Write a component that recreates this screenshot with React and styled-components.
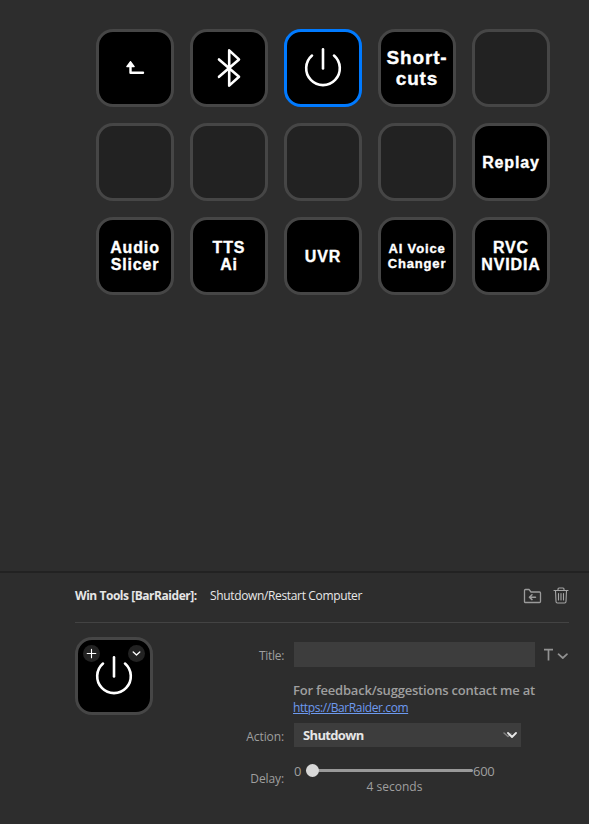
import React from 'react';
import styled, { createGlobalStyle } from 'styled-components';

const GlobalStyle = createGlobalStyle`
  body { margin: 0; background: #2d2d2d; }
  * { box-sizing: border-box; }
`;

const uiFont = '"Open Sans", "Noto Sans", sans-serif';

const Window = styled.main`
  width: 589px;
  height: 824px;
  display: flex;
  flex-direction: column;
  overflow: hidden;
  background: #2d2d2d;
  color: #9f9f9f;
  font-family: ${uiFont};
`;

const Canvas = styled.section`
  height: 571px;
  flex: none;
  padding: 29px 0 0 96px;
`;

const KeyGrid = styled.div`
  display: grid;
  grid-template-columns: repeat(5, 78px);
  grid-auto-rows: 78px;
  gap: 16px;
`;

const Key = styled.div`
  position: relative;
  width: 78px;
  height: 78px;
  display: flex;
  align-items: center;
  justify-content: center;
  border: 3px solid ${(p) => (p.$selected ? '#007aff' : '#464646')};
  border-radius: 17px;
  background: ${(p) => (p.$empty ? '#222222' : '#000000')};
`;

const KeyTitle = styled.span`
  color: #fff;
  font-family: "Liberation Sans", Arial, sans-serif;
  font-weight: 700;
  font-size: ${(p) => p.$size}px;
  line-height: ${(p) => p.$line}px;
  letter-spacing: ${(p) => p.$spacing}px;
  -webkit-text-stroke: 0.35px #fff;
  text-align: center;
  white-space: pre;
`;

const Glyph = styled.svg`
  display: block;
  flex: none;
  fill: none;
  stroke: ${(p) => p.$color || '#fff'};
  stroke-linecap: round;
  stroke-linejoin: round;
`;

const Inspector = styled.section`
  flex: 1;
  padding: 0 20px 0 75px;
  border-top: 2px solid #222222;
`;

const Header = styled.header`
  height: 50px;
  display: flex;
  align-items: center;
  border-bottom: 1px solid #434343;
  padding-bottom: 4px;
`;

const PluginName = styled.h1`
  width: 135px;
  margin: 0;
  font-size: 12px;
  font-weight: 700;
  letter-spacing: -0.46px;
  color: #e6e6e6;
  white-space: nowrap;
`;

const ActionName = styled.span`
  font-size: 12px;
  letter-spacing: -0.35px;
  color: #e8e8e8;
`;

const HeaderTools = styled.div`
  display: flex;
  align-items: center;
  gap: 11px;
  margin-left: auto;
`;

const Details = styled.div`
  display: flex;
  padding-top: 14px;
`;

const Badge = styled.span`
  position: absolute;
  top: 5px;
  ${(p) => p.$side}: 5px;
  width: 17px;
  height: 17px;
  display: grid;
  place-items: center;
  border-radius: 50%;
  background: #222222;
`;

const Form = styled.div`
  flex: 1;
  display: flex;
  flex-direction: column;
  padding-top: 5px;
`;

const Row = styled.div`
  display: grid;
  grid-template-columns: 131px 1fr;
  column-gap: 10px;
  height: ${(p) => p.$height}px;
  margin-bottom: ${(p) => p.$after || 0}px;
`;

const Label = styled.label`
  padding-top: ${(p) => p.$top}px;
  text-align: right;
  font-size: 12px;
  line-height: 18px;
  letter-spacing: ${(p) => p.$spacing || -0.1}px;
`;

const TitleField = styled.div`
  display: flex;
  align-items: center;
`;

const TitleInput = styled.input`
  width: 241px;
  height: 25px;
  padding: 0 8px;
  border: 0;
  outline: 0;
  background: #3d3d3d;
  color: #ddd;
  font: 12px ${uiFont};
`;

const TextTools = styled.div`
  display: flex;
  margin-left: 8px;
`;

const Feedback = styled.div`
  margin-left: -1px;
  display: flex;
  flex-direction: column;
  align-items: flex-start;
  white-space: nowrap;
`;

const Message = styled.strong`
  font-size: 13px;
  line-height: 18px;
  font-weight: 600;
  letter-spacing: -0.21px;
`;

const Link = styled.a`
  font-size: 12px;
  line-height: 17px;
  letter-spacing: -0.4px;
  color: #6d9af0;
  text-decoration: underline;
`;

const Select = styled.div`
  width: 227px;
  height: 24px;
  display: flex;
  align-items: center;
  justify-content: space-between;
  padding: 0 4px 0 9px;
  background: #3d3d3d;
  color: #e6e6e6;
  font-size: 13px;
  font-weight: 700;
  letter-spacing: -0.65px;
`;

const Delay = styled.div`
  width: 201px;
`;

const SliderRow = styled.div`
  height: 19px;
  display: flex;
  align-items: center;
  font-size: 13px;
  line-height: 19px;
  letter-spacing: -0.3px;
`;

const SliderEnd = styled.span`
  width: ${(p) => p.$width}px;
  padding-top: 2px;
`;

const Track = styled.div`
  width: 167px;
  height: 3px;
  display: flex;
  align-items: center;
  border-radius: 2px;
  background: #999999;
`;

const Thumb = styled.div`
  width: 13px;
  height: 13px;
  flex: none;
  border-radius: 50%;
  background: #d8d8d8;
`;

const Value = styled.div`
  margin-top: -1px;
  font-size: 12px;
  line-height: 15px;
  text-align: center;
`;

function PowerIcon() {
  return (
    <Glyph width="42" height="42" viewBox="0 0 42 42" strokeWidth="2.6">
      <path d="M21 2.4V21.4" />
      <path d="M10 8.6A16.8 16.8 0 1 0 32 8.6" />
    </Glyph>
  );
}

function BluetoothIcon() {
  return (
    <Glyph width="24" height="40" viewBox="0 0 24 40" strokeWidth="2.6">
      <path d="M2 11.4L22 28.8L12.2 37.6V2.4L22 11.4L2 28.8" />
    </Glyph>
  );
}

function BackIcon() {
  return (
    <Glyph width="20" height="16" viewBox="0 0 20 16" strokeWidth="2.4">
      <path d="M5.5 6v6.8H18" />
      <path d="M5.5 1.6L9.2 6.6H1.8Z" fill="#fff" strokeWidth="1.2" />
    </Glyph>
  );
}

function FolderIcon() {
  return (
    <Glyph width="19" height="16" viewBox="0 0 19 16" strokeWidth="1.3" $color="#9b9b9b">
      <path d="M1.5 14V2.5Q1.5 1.5 2.5 1.5H6L8 4H16.5Q17.5 4 17.5 5V13.5Q17.5 14.5 16.5 14.5H2Q1.5 14.5 1.5 14Z" />
      <path d="M12.5 9.2H6.8M9 6.8L6.4 9.2L9 11.6" strokeWidth="1.5" />
    </Glyph>
  );
}

function TrashIcon() {
  return (
    <Glyph width="16" height="18" viewBox="0 0 16 18" strokeWidth="1.1" $color="#a6a6a6">
      <path d="M1 3.5H15M5 3V2Q5 1 6 1H10Q11 1 11 2V3M2.5 3.5L3 14.5Q3 16 4.5 16H11.5Q13 16 13 14.5L13.5 3.5M5.5 6.5V13M8 6.5V13M10.5 6.5V13" />
    </Glyph>
  );
}

function TextIcon() {
  return (
    <Glyph width="25" height="16" viewBox="0 0 25 16" strokeWidth="1.7" $color="#929292">
      <path d="M1 2.6H10M5.5 2.6V13.5" strokeLinecap="butt" />
      <path d="M15.5 7.2L19.8 11L24 7.2" />
    </Glyph>
  );
}

function SelectArrows() {
  return (
    <Glyph width="14" height="10" viewBox="0 0 14 10" strokeWidth="1.5">
      <path d="M1 3L5 6.5L8 4" stroke="#858585" strokeWidth="1.4" />
      <path d="M5 3L9 7L13 3" stroke="#e8e8e8" strokeWidth="1.8" />
    </Glyph>
  );
}

const large = { size: 19, line: 21, spacing: 0.85 };
const medium = { size: 16, line: 17, spacing: 0.85 };
const small = { size: 13, line: 15, spacing: 0.85 };

const keys = [
  { icon: <BackIcon /> },
  { icon: <BluetoothIcon /> },
  { icon: <PowerIcon />, selected: true },
  { title: 'Short-\ncuts', type: large },
  {},
  {},
  {},
  {},
  {},
  { title: 'Replay', type: medium },
  { title: 'Audio\nSlicer', type: medium },
  { title: 'TTS\nAi', type: medium },
  { title: 'UVR', type: medium },
  { title: 'AI Voice\nChanger', type: small },
  { title: 'RVC\nNVIDIA', type: medium },
];

export default function App() {
  return (
    <>
      <GlobalStyle />
      <Window>
        <Canvas>
          <KeyGrid>
            {keys.map(({ icon, title, type, selected }, i) => (
              <Key key={i} $selected={selected} $empty={!icon && !title}>
                {icon}
                {title && (
                  <KeyTitle $size={type.size} $line={type.line} $spacing={type.spacing}>
                    {title}
                  </KeyTitle>
                )}
              </Key>
            ))}
          </KeyGrid>
        </Canvas>
        <Inspector>
          <Header>
            <PluginName>Win Tools [BarRaider]:</PluginName>
            <ActionName>Shutdown/Restart Computer</ActionName>
            <HeaderTools>
              <FolderIcon />
              <TrashIcon />
            </HeaderTools>
          </Header>
          <Details>
            <Key>
              <PowerIcon />
              <Badge $side="left">
                <Glyph width="11" height="11" viewBox="0 0 11 11" strokeWidth="1.1">
                  <path d="M5.5 1.2V9.8M1.2 5.5H9.8" />
                </Glyph>
              </Badge>
              <Badge $side="right">
                <Glyph width="9" height="9" viewBox="0 0 9 9" strokeWidth="1.3">
                  <path d="M1.2 3L4.5 6L7.8 3" />
                </Glyph>
              </Badge>
            </Key>
            <Form>
              <Row $height={25} $after={14}>
                <Label $top={5} $spacing={-0.3}>Title:</Label>
                <TitleField>
                  <TitleInput aria-label="Title" />
                  <TextTools><TextIcon /></TextTools>
                </TitleField>
              </Row>
              <Row $height={35} $after={7}>
                <span />
                <Feedback>
                  <Message>For feedback/suggestions contact me at</Message>
                  <Link href="#">https://BarRaider.com</Link>
                </Feedback>
              </Row>
              <Row $height={24} $after={14}>
                <Label $top={5}>Action:</Label>
                <Select>
                  Shutdown
                  <SelectArrows />
                </Select>
              </Row>
              <Row $height={40}>
                <Label $top={9}>Delay:</Label>
                <Delay>
                  <SliderRow>
                    <SliderEnd $width={12}>0</SliderEnd>
                    <Track><Thumb /></Track>
                    <SliderEnd $width={22}>600</SliderEnd>
                  </SliderRow>
                  <Value>4 seconds</Value>
                </Delay>
              </Row>
            </Form>
          </Details>
        </Inspector>
      </Window>
    </>
  );
}
